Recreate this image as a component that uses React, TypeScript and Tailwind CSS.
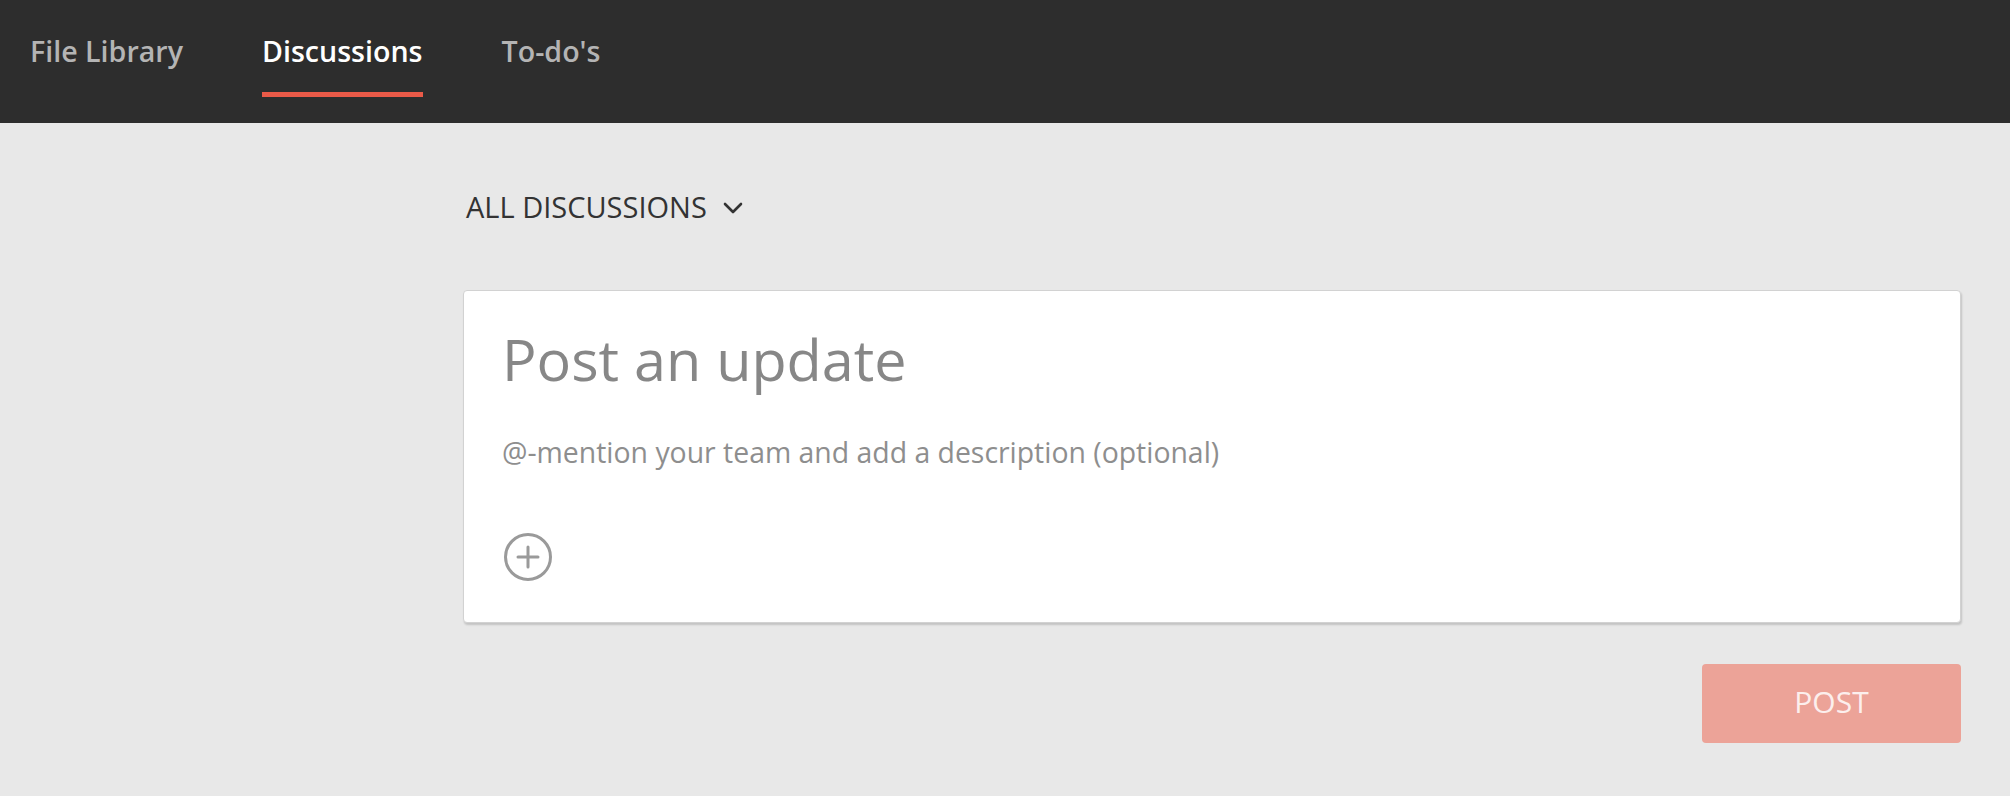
import React from 'react';

const tabs = [
  { label: 'File Library', active: false },
  { label: 'Discussions', active: true },
  { label: "To-do's", active: false },
];

export default function App() {
  return (
    <div className="min-h-screen bg-[#e8e8e8] font-['Open_Sans',sans-serif]">
      {/* Top tabs */}
      <nav className="h-[123px] bg-[#2d2d2d] flex gap-[79px] pl-[30px]">
        {tabs.map((t) => (
          <div key={t.label} className="flex flex-col pt-[32px]">
            <span
              className={
                'text-[28.6px] leading-[38px] font-semibold ' +
                (t.active ? 'text-white' : 'text-[#b4b4b4]')
              }
            >
              {t.label}
            </span>
            <div className={'mt-[22px] h-[5px] ' + (t.active ? 'bg-[#ea5a48]' : 'bg-transparent')} />
          </div>
        ))}
      </nav>

      <main className="pl-[463px] pr-[49px] pt-[66px]">
        {/* Filter */}
        <button className="ml-[3px] flex items-center gap-[16px] h-[36px] text-[29px] leading-[36px] text-[#333333]">
          <span>ALL DISCUSSIONS</span>
          <svg width="20" height="12" viewBox="0 0 20 12" fill="none" className="mt-[2px]">
            <polyline points="2,2 10,10 18,2" stroke="#333" strokeWidth="2.6" strokeLinecap="round" strokeLinejoin="round" />
          </svg>
        </button>

        {/* Composer */}
        <div className="mt-[65px] bg-white border border-[#d2d2d2] rounded-[4px] shadow-[1px_2px_2px_rgba(0,0,0,0.16)] pl-[38px] pt-[34px] pb-[41px]">
          <div className="text-[57.5px] leading-[68px] text-[#878787]">Post an update</div>
          <div className="mt-[40px] text-[28.4px] leading-[38px] text-[#8e8e8e]">
            @-mention your team and add a description (optional)
          </div>
          <button className="mt-[62px] ml-[2px] block">
            <svg width="48" height="48" viewBox="0 0 48 48" fill="none">
              <circle cx="24" cy="24" r="22.5" stroke="#9a9a9a" strokeWidth="3" />
              <path d="M24 14v20M14 24h20" stroke="#9a9a9a" strokeWidth="3" strokeLinecap="round" />
            </svg>
          </button>
        </div>

        <div className="flex justify-end mt-[41px]">
          <button className="w-[259px] h-[79px] pb-[4px] rounded-[4px] bg-[#eca398] text-[#fcefed] text-[30px] leading-[40px]">
            POST
          </button>
        </div>
      </main>
    </div>
  );
}
